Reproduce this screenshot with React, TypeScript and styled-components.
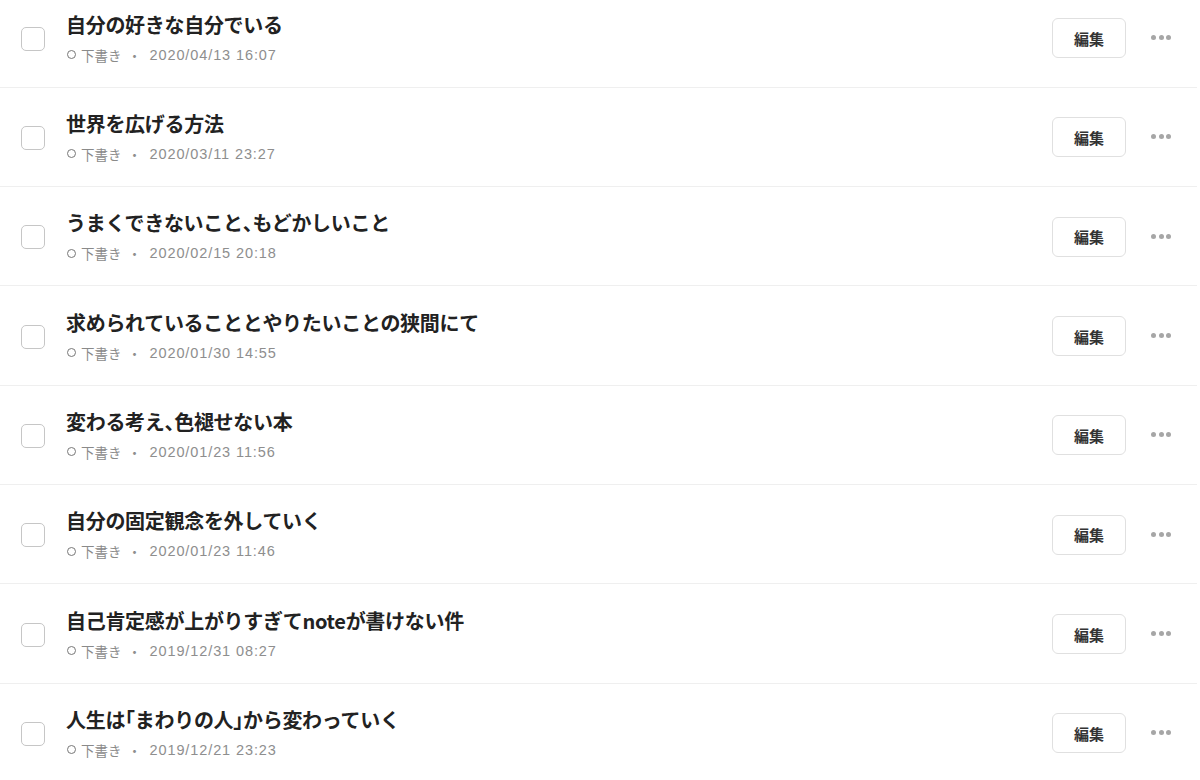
import React from "react";
import styled, { createGlobalStyle } from "styled-components";

const Global = createGlobalStyle`
  html, body {
    margin: 0;
    padding: 0;
    background: #ffffff;
    overflow: hidden;
  }
  body {
    font-family: "Liberation Sans", "Noto Sans CJK JP", sans-serif;
    color: #222;
  }
`;

const List = styled.ul`
  list-style: none;
  margin: -11.5px 3px 0 0;
  padding: 0;
`;

const Row = styled.li`
  box-sizing: border-box;
  height: 99.33px;
  display: flex;
  align-items: center;
  padding: 0 26px 0 21px;
  border-bottom: 1px solid #efefef;
`;

const Check = styled.span`
  box-sizing: border-box;
  flex: none;
  width: 24px;
  height: 24px;
  border: 1.5px solid #c6c6c6;
  border-radius: 5px;
  background: #fff;
  margin-top: 2px;
`;

const Body = styled.div`
  flex: 1;
  display: flex;
  flex-direction: column;
  margin-left: 21px;
`;

const Title = styled.div`
  font-family: "Noto Sans CJK JP", sans-serif;
  font-weight: 700;
  font-size: 20px;
  letter-spacing: -0.3px;
  line-height: 28px;
  color: #222;
  margin-bottom: 6px;
`;

const Punct = styled.span`
  font-feature-settings: "halt";
`;

const Meta = styled.div`
  display: flex;
  align-items: center;
  height: 20px;
  font-size: 14px;
  color: #8e8e8e;
`;

const Status = styled.span`
  display: inline-flex;
  align-items: center;
  gap: 5px;
  font-family: "Noto Sans CJK JP", sans-serif;
  font-size: 13.5px;
  color: #8a8a8a;
`;

const Ring = styled.span`
  box-sizing: border-box;
  width: 9px;
  height: 9px;
  border: 1.5px solid #777;
  border-radius: 50%;
  margin-left: 1px;
`;

const Sep = styled.span`
  font-family: "Noto Sans CJK JP", sans-serif;
  margin: 0 8px 0 6px;
  color: #8e8e8e;
`;

const DateText = styled.span`
  font-family: "Liberation Sans", sans-serif;
  font-size: 14.5px;
  letter-spacing: 0.9px;
  color: #8e8e8e;
`;

const EditButton = styled.button`
  box-sizing: border-box;
  flex: none;
  width: 74px;
  height: 40px;
  border: 1px solid #e0e0e0;
  border-radius: 6px;
  background: #fff;
  font-family: "Noto Sans CJK JP", sans-serif;
  font-weight: 700;
  font-size: 15px;
  color: #333;
  padding: 0;
  margin-top: 1px;
`;

const More = styled.span`
  flex: none;
  display: flex;
  justify-content: space-between;
  margin-left: 25px;
  width: 20px;
`;

const Dot = styled.span`
  width: 5px;
  height: 5px;
  border-radius: 50%;
  background: #a6a6a6;
`;

const items = [
  { title: "自分の好きな自分でいる", date: "2020/04/13 16:07" },
  { title: "世界を広げる方法", date: "2020/03/11 23:27" },
  { title: "うまくできないこと、もどかしいこと", date: "2020/02/15 20:18" },
  { title: "求められていることとやりたいことの狭間にて", date: "2020/01/30 14:55" },
  { title: "変わる考え、色褪せない本", date: "2020/01/23 11:56" },
  { title: "自分の固定観念を外していく", date: "2020/01/23 11:46" },
  { title: "自己肯定感が上がりすぎてnoteが書けない件", date: "2019/12/31 08:27" },
  { title: "人生は「まわりの人」から変わっていく", date: "2019/12/21 23:23" },
];

function renderTitle(text: string) {
  return text.split(/([、「」])/).map((part, i) =>
    /^[、「」]$/.test(part) ? <Punct key={i}>{part}</Punct> : part
  );
}

export default function App() {
  return (
    <>
      <Global />
      <List>
        {items.map((it) => (
          <Row key={it.date + it.title}>
            <Check />
            <Body>
              <Title>{renderTitle(it.title)}</Title>
              <Meta>
                <Status>
                  <Ring />
                  下書き
                </Status>
                <Sep>・</Sep>
                <DateText>{it.date}</DateText>
              </Meta>
            </Body>
            <EditButton>編集</EditButton>
            <More>
              <Dot />
              <Dot />
              <Dot />
            </More>
          </Row>
        ))}
      </List>
    </>
  );
}
